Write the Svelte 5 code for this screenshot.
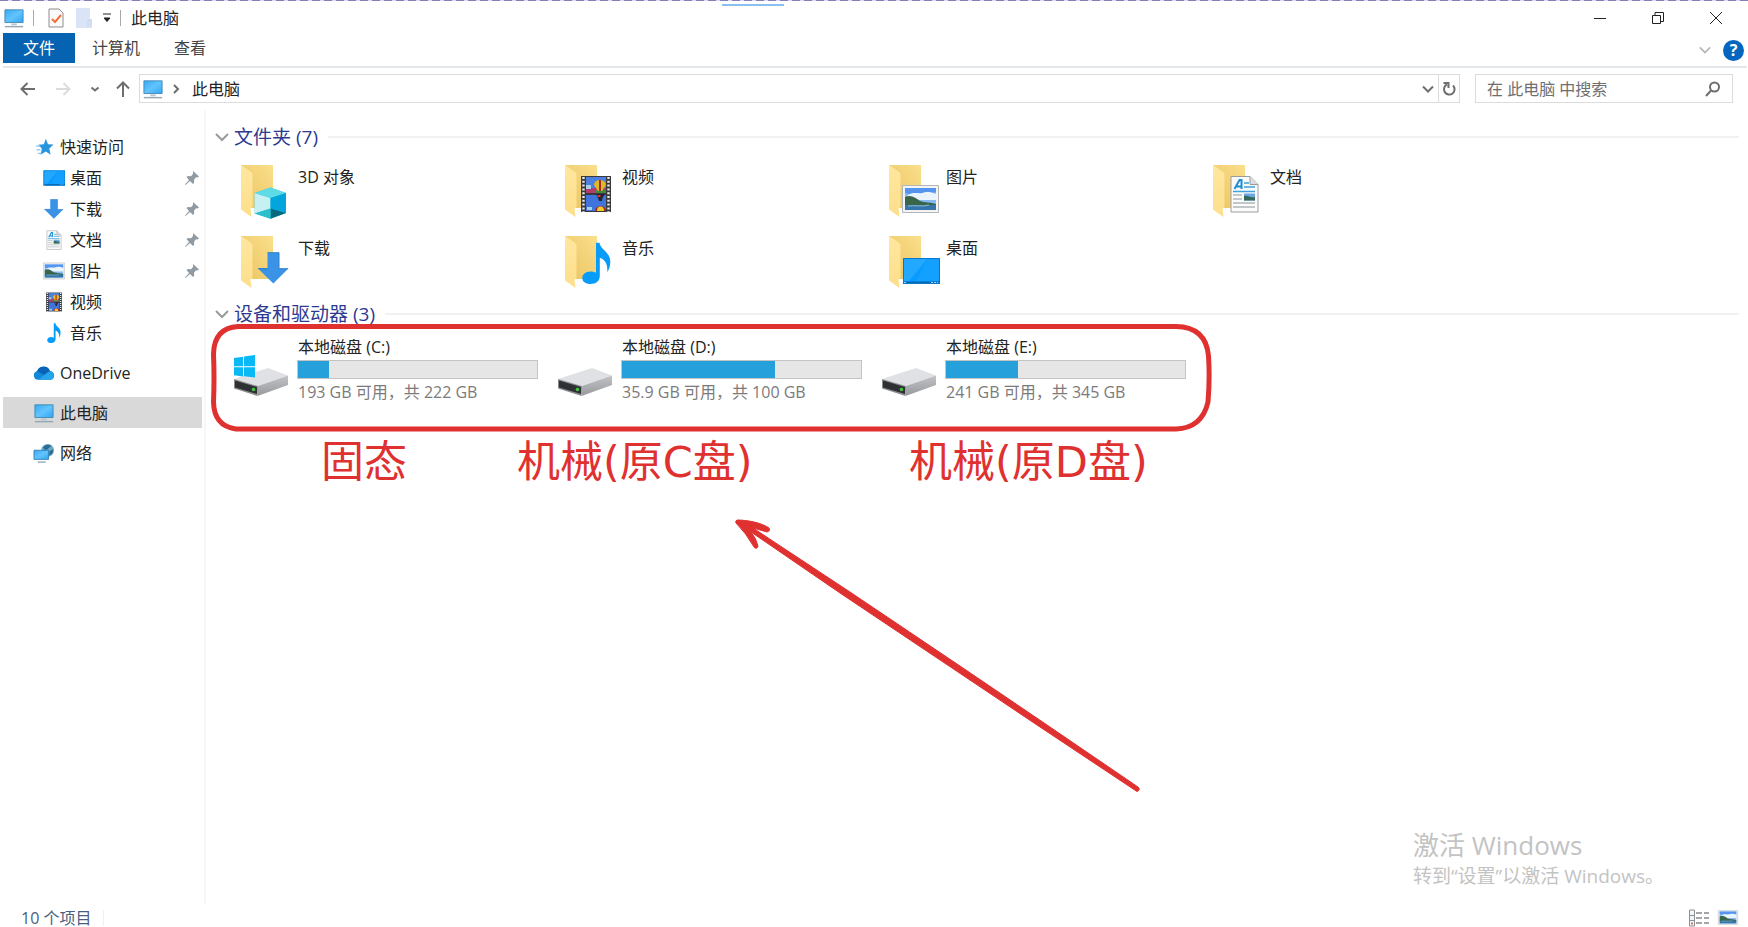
<script lang="ts">
  type Place = { id: string; name: string; icon: string; pinned?: boolean };
  type Drive = { name: string; used: number; info: string; system?: boolean };

  let query = $state("");
  let current = $state("pc");
  let showFolders = $state(true);
  let showDrives = $state(true);

  const quickAccess: Place[] = [
    { id: "desktop", name: "桌面", icon: "desktop", pinned: true },
    { id: "downloads", name: "下载", icon: "download", pinned: true },
    { id: "documents", name: "文档", icon: "document", pinned: true },
    { id: "pictures", name: "图片", icon: "picture", pinned: true },
    { id: "videos", name: "视频", icon: "video" },
    { id: "music", name: "音乐", icon: "music" },
  ];

  const roots: Place[] = [
    { id: "onedrive", name: "OneDrive", icon: "cloud" },
    { id: "pc", name: "此电脑", icon: "pc" },
    { id: "network", name: "网络", icon: "network" },
  ];

  const folders = [
    { name: "3D 对象", icon: "cube" },
    { name: "视频", icon: "video" },
    { name: "图片", icon: "picture" },
    { name: "文档", icon: "document" },
    { name: "下载", icon: "download" },
    { name: "音乐", icon: "music" },
    { name: "桌面", icon: "desktop" },
  ];

  const drives: Drive[] = [
    { name: "本地磁盘 (C:)", used: 13, info: "193 GB 可用，共 222 GB", system: true },
    { name: "本地磁盘 (D:)", used: 64, info: "35.9 GB 可用，共 100 GB" },
    { name: "本地磁盘 (E:)", used: 30, info: "241 GB 可用，共 345 GB" },
  ];

  // part of the 56x56 tile that each shape fills, used for the small icons
  const boxes: Record<string, string> = {
    video: "22 12 32 38",
    picture: "20 22 37 28",
    document: "24 12 29 38",
    download: "24 18 31 32",
    music: "24 8 29 42",
    desktop: "20 23 38 28",
    pc: "0 0 22 22",
    cloud: "0 0 22 22",
    network: "0 0 22 22",
    star: "0 0 22 22",
  };
</script>

{#snippet shape(name: string)}
  {#if name === "cube"}
    <path d="M36.500 24.500 52 30v20l-15.500 5.700L20.700 50.500V30z" fill="#35c3d6" />
    <path d="M20.700 30 36.500 35v10.500L20.700 50.500z" fill="#c6f0f2" />
    <path d="M36.500 24.500 52 30l-15.500 5-15.800-5z" fill="#5fdbe6" />
    <path d="M52 30 36.500 35v10.500L52 50z" fill="#03a6dc" />
    <path d="M36.500 45.500 52 50l-15.500 5.700z" fill="#04697f" />
    <path d="M36.500 45.500 20.700 50.500l15.800 5.200z" fill="#2cc0cd" />
  {:else if name === "video"}
    <path d="M23 13h30v36H23z" fill="#3a3a3c" />
    <path d="M28 14h20v16H28z" fill="#4c7fe0" />
    <path d="M28 32h20v16H28z" fill="#3f74dc" />
    <path d="M28 25h20v5H28z" fill="#b23d6d" />
    <path d="M37 27h11v3H37z" fill="#3e8b3c" />
    <path d="M28 22h5v4h-5zM29 44h5v3h-5z" fill="#a8d0e8" />
    <path d="M36 22a6 5 0 0 1 12 0l-4 6h-4z" fill="#e4b823" />
    <path d="M41 17h2v11h-2zM37 48a5.500 5 0 0 1 11 0z" fill="#a92c23" />
    <path d="M39 48a3.500 4.500 0 0 1 7 0z" fill="#f0cc2d" />
    <path d="M38 31h9l-2.500 4L44 38h-3l-1-3z" fill="#23242e" />
    <path d="M39.500 32h3v2h-3z" fill="#d33" />
    <path d="M25.500 14v35M50.500 14v35" stroke="#e8e8e8" stroke-width="2.400" stroke-dasharray="2 1.800" />
  {:else if name === "picture"}
    <path d="M20.500 22.500h36v27h-36z" fill="#f4f4f4" stroke="#b4b7ba" />
    <path d="M23 25h31v22H23z" fill="#86baf0" />
    <path d="M23 25h31v4c-10 3-22 4-31 1z" fill="#5496ef" />
    <path d="M25 33c5-5 12-2 15-3s8-2 14 1v6H25z" fill="#eaf4fc" />
    <path d="M23 34c6-3 11 1 15 4 5 2 11 1 16 3v2H23z" fill="#39664b" />
    <path d="M23 42h31v5H23z" fill="#3575a9" />
    <path d="M26 43c7-1 14 1 21-1" stroke="#8bbbd2" fill="none" />
  {:else if name === "document"}
    <path d="M25 13.500h19l8 8V49H25z" fill="#fbfbfb" stroke="#9a9da0" />
    <path d="M44 13.500v8h8" fill="#dcdcdc" stroke="#9a9da0" />
    <path d="m28.500 26 5-9h2v9M30 23.500h5" fill="none" stroke="#1c8fd4" stroke-width="2" />
    <path d="M38 20h5M38 24h11M27 28.500h22" stroke="#3da2dd" stroke-width="1.500" />
    <path d="M27 32h9M27 36h9M27 40h22M27 44h22" stroke="#b3b7ba" stroke-width="1.300" />
    <path d="M38 30.500h11v7H38z" fill="#6ba7e0" />
    <path d="M38 33c4-1 6 2 11 1v3.500H38z" fill="#36685c" />
  {:else if name === "download"}
    <path d="M33.500 18.700H45v16h9.200L39.300 49.600 24.300 34.700h9.200z" fill="#3a93e6" />
    <path d="M33.500 18.700H45v16h9.200M24.300 34.700h9.200z" fill="none" stroke="#2c80cf" />
  {:else if name === "music"}
    <path
      d="M38 8.700h3.500c.8 7 10.800 9 10.800 19 0 5-1.500 8-3 10.500.5-8-2-12.500-7.500-14.500V42c0 5-4 8-9 8-5.500 0-8.500-2.500-8.500-6s3-6.500 8-6.500c2 0 4 .4 5.700 1.300z"
      fill="#079bfa"
    />
  {:else if name === "desktop"}
    <path d="M21 24h37v26H21z" fill="#099bff" />
    <path d="M21 24h25L27 47h-6z" fill="#23a8ff" />
    <path d="M46 24h12v23H34z" fill="#1aa4ff" opacity=".6" />
    <path d="M21 47.500h37V50H21z" fill="#0768b4" />
    <path d="M22 48.500h2M49 48.500h7" stroke="#9cd3fa" stroke-dasharray="2 1" />
    <path d="M21.500 24.500h36v25h-36z" fill="none" stroke="#0877c8" />
  {:else if name === "pc"}
    <path d="M1 2h20v14H1z" fill="url(#screen)" stroke="#3f88b5" />
    <path d="M8 17h6v2H8z" fill="#b9c5cd" />
    <path d="M1 20.500h20" stroke="#94a8b8" stroke-width="1.600" />
  {:else if name === "cloud"}
    <path d="M4.500 18.500a5 5 0 0 1-1-9.800 7.500 7 0 0 1 14 0 5 5 0 0 1 1 9.800z" fill="#1087d8" />
    <path d="M3.500 9A7.500 7 0 0 1 16.500 6.500l1 2.500-6.500 4z" fill="#0a63b8" />
    <path d="M4.500 18.500 16 9.500a4.500 4.500 0 0 1 2.500 9z" fill="#27a5ea" />
  {:else if name === "network"}
    <circle cx="15" cy="8" r="7" fill="#6ba9c6" />
    <path d="M10 5c2-3 6-4 9-2-1 2-3 2-4 4l-3 1zM17 9l4-2c0 4-1 6-4 7z" fill="#2b6c95" />
    <path d="M0 8h16v10H0z" fill="url(#screen)" stroke="#3282b2" />
    <path d="M4 21h9" stroke="#94a8b8" stroke-width="1.500" />
  {:else if name === "star"}
    <path d="m13 2 2.400 6 6.100.3-4.700 4.400 1.500 6.800-5.300-3.500-5.800 3.500 1.500-6.500L4.500 8.600l6.400-.6z" fill="#2796df" />
    <path d="M2 10h5M3 14h4M4 18h4" stroke="#8fcdf4" stroke-width="1.500" />
  {/if}
{/snippet}

{#snippet small(name: string)}
  <svg class="small" viewBox={boxes[name]} aria-hidden="true">{@render shape(name)}</svg>
{/snippet}

{#snippet chevron()}
  <svg class="chevron" viewBox="0 0 14 14" aria-hidden="true"><path d="m1 4 6 6 6-6" /></svg>
{/snippet}

<svg class="defs" aria-hidden="true">
  <defs>
    <linearGradient id="screen" x1="0" y1="0" x2="1" y2="1">
      <stop offset="0" stop-color="#36a9f3" />
      <stop offset=".5" stop-color="#62c4ff" />
      <stop offset="1" stop-color="#30a5f2" />
    </linearGradient>
    <linearGradient id="folder-back" x1="0" y1="1" x2="1" y2="0">
      <stop offset="0" stop-color="#e9c362" />
      <stop offset="1" stop-color="#fbdf8b" />
    </linearGradient>
    <linearGradient id="folder-flap" x1="0" y1="0" x2="0" y2="1">
      <stop offset="0" stop-color="#ffe79f" />
      <stop offset="1" stop-color="#fddf8b" />
    </linearGradient>
    <linearGradient id="drive-side" x1="0" y1="0" x2="0" y2="1">
      <stop offset="0" stop-color="#c2c3c6" />
      <stop offset="1" stop-color="#98999c" />
    </linearGradient>
  </defs>
</svg>

<div class="window" lang="zh-CN">
  <header class="titlebar">
    {@render small("pc")}
    <span class="bar"></span>
    <button class="quick" aria-label="属性">
      <svg width="18" height="20" viewBox="0 0 18 20">
        <path d="M2 1h10l4 4v14H2z" fill="#fafafa" stroke="#8d8d8d" />
        <path d="m5 11 3 3 6-7" fill="none" stroke="#f0703a" stroke-width="2" />
      </svg>
    </button>
    <button class="quick" aria-label="新建文件夹">
      <svg width="18" height="20" viewBox="0 0 18 20">
        <path d="M1 0h14v11h2v9H1z" fill="#dae4f6" />
        <path d="M13 19v-7h3v7" fill="none" stroke="#c6d4ec" />
      </svg>
    </button>
    <button class="more" aria-label="自定义快速访问工具栏">
      <svg width="10" height="10" viewBox="0 0 10 10"><path d="M1 1h8M2 5h6L5 8.500z" fill="#222" stroke="#222" /></svg>
    </button>
    <span class="bar"></span>
    <h1>此电脑</h1>
    <div class="controls">
      <button aria-label="最小化"><svg width="14" height="14" viewBox="0 0 14 14"><path d="M1 7.500h12" /></svg></button>
      <button aria-label="还原">
        <svg width="14" height="14" viewBox="0 0 14 14"><path d="M1.500 4.500h8v8h-8zM4 4.500v-3h8.500v9H10" /></svg>
      </button>
      <button aria-label="关闭"><svg width="14" height="14" viewBox="0 0 14 14"><path d="m1 1 12 12M13 1 1 13" /></svg></button>
    </div>
  </header>

  <nav class="ribbon" aria-label="功能区">
    <button class="file">文件</button>
    <button>计算机</button>
    <button>查看</button>
    <div class="ribbon-end">
      <button class="collapse" aria-label="展开功能区">{@render chevron()}</button>
      <button class="help" aria-label="帮助">?</button>
    </div>
  </nav>

  <div class="navbar">
    <div class="history">
      <button aria-label="后退"><svg width="16" height="14" viewBox="0 0 16 14"><path d="M15 7H1.500M7.500 1l-6 6 6 6" /></svg></button>
      <button aria-label="前进" disabled>
        <svg width="16" height="14" viewBox="0 0 16 14"><path d="M1 7h13.500M8.500 1l6 6-6 6" /></svg>
      </button>
      <button class="recent" aria-label="最近的位置">
        <svg width="10" height="14" viewBox="0 0 10 14"><path d="m1.500 5.500 3.500 3 3.500-3" /></svg>
      </button>
      <button aria-label="上移"><svg width="14" height="16" viewBox="0 0 14 16"><path d="M7 16V1.500M1 7.500l6-6 6 6" /></svg></button>
    </div>
    <div class="address">
      {@render small("pc")}
      <svg class="crumb-arrow" width="8" height="10" viewBox="0 0 8 10" aria-hidden="true"><path d="m2 1 4 4-4 4" /></svg>
      <button class="crumb">此电脑</button>
      <button class="drop" aria-label="以前的位置">
        <svg width="12" height="12" viewBox="0 0 12 12"><path d="m1 3.500 5 5 5-5" /></svg>
      </button>
      <button class="refresh" aria-label="刷新">
        <svg width="14" height="16" viewBox="0 0 14 16"><path d="M11 4.500a5.300 5.300 0 1 1-6-1M1.500 2h5v5" /></svg>
      </button>
    </div>
    <form class="search" role="search">
      <input type="text" aria-label="搜索" placeholder="在 此电脑 中搜索" bind:value={query} />
      <svg width="16" height="16" viewBox="0 0 16 16" aria-hidden="true"><circle cx="9.500" cy="6" r="4.500" /><path d="M6 9.500 1 15" /></svg>
    </form>
  </div>

  <div class="body">
    <nav class="sidebar" aria-label="导航窗格">
      <button class="row">{@render small("star")}快速访问</button>
      {#each quickAccess as place (place.id)}
        <button class="row child" class:selected={current === place.id} onclick={() => (current = place.id)}>
          {@render small(place.icon)}{place.name}
          {#if place.pinned}
            <svg class="pin" width="14" height="14" viewBox="0 0 14 14" aria-hidden="true">
              <path d="m8 0 6 5.500-1.500 1-1.500-.2-2 2.400.2 3L8 13 5 10l-4.500 4L0 13.500 4 9 1.500 6 3 5l3 .2L8 3z" />
            </svg>
          {/if}
        </button>
      {/each}
      {#each roots as place (place.id)}
        <button class="row root" class:selected={current === place.id} onclick={() => (current = place.id)}>
          {@render small(place.icon)}{place.name}
        </button>
      {/each}
    </nav>

    <main>
      <section>
        <h2>
          <button aria-expanded={showFolders} onclick={() => (showFolders = !showFolders)}>{@render chevron()}文件夹 (7)</button>
        </h2>
        {#if showFolders}
          <div class="grid">
            {#each folders as folder}
              <a class="folder" href="#{folder.icon}">
                <svg class="tile-icon" viewBox="0 0 56 56" aria-hidden="true">
                  <path d="M7 2h32v43H7z" fill="url(#folder-back)" />
                  <path d="m7 2 9.500 6.500c1.500 1 2 2 2 3.500v32l-2 1.500 1 8.500L7 46.500z" fill="url(#folder-flap)" />
                  {@render shape(folder.icon)}
                </svg>
                <span>{folder.name}</span>
              </a>
            {/each}
          </div>
        {/if}
      </section>

      <section>
        <h2>
          <button aria-expanded={showDrives} onclick={() => (showDrives = !showDrives)}>{@render chevron()}设备和驱动器 (3)</button>
        </h2>
        {#if showDrives}
          <div class="grid drives">
            {#each drives as drive}
              <div class="drive">
                <svg class="tile-icon" viewBox="0 0 56 56" aria-hidden="true">
                  <path d="M0 37 34 26l20 7.500L24 44z" fill="#e0e1e5" />
                  <path d="M24 44 54 33.500V43L23.500 54z" fill="url(#drive-side)" />
                  <path d="m0 37 24 7-.5 10L0 46.500z" fill="#8b8c8e" />
                  <path d="m1 38.500 22 6.500v7L1 45.500z" fill="#2f3033" />
                  <circle cx="19.500" cy="47.500" r="1.800" fill="#3fc63a" />
                  {#if drive.system}
                    <path d="m0 16 9-1.200v9.400H0zM10 14.600 21 13v11.200H10zM0 25.200h9v9.200l-9-1.200zM10 25.200h11v10.300l-11-1.200z" fill="#09b9f6" />
                  {/if}
                </svg>
                <div class="drive-text">
                  <span class="drive-name">{drive.name}</span>
                  <div class="meter"><div class="used" style="width: {drive.used}%"></div></div>
                  <span class="info">{drive.info}</span>
                </div>
              </div>
            {/each}
          </div>
        {/if}
      </section>
    </main>
  </div>

  <footer>
    <span>10 个项目</span>
    <span class="bar"></span>
    <div class="views">
      <button aria-label="详细信息">
        <svg width="22" height="18" viewBox="0 0 22 18">
          <path d="M1.500 1h5v16h-5z" fill="#f2f4f8" stroke="#8d9096" />
          <path d="M2 6.500h4M2 11.500h4" stroke="#8d9096" />
          <path d="M3 14.500h2" stroke="#e0745f" stroke-width="2" />
          <path d="M8 4h6M16 4h5M8 9h6M16 9h5M8 14h6M16 14h5" stroke="#86888c" stroke-width="1.500" />
        </svg>
      </button>
      <button class="large" aria-label="大图标">{@render small("picture")}</button>
    </div>
  </footer>

  <aside class="watermark">
    <strong>激活 Windows</strong>
    <span>转到“设置”以激活 Windows。</span>
  </aside>

  <!-- hand-drawn notes laid over the window -->
  <div class="notes">
    <svg aria-hidden="true">
      <path
        class="frame"
        d="M238 326.500H1176Q1206 327 1208.500 356Q1210 378 1208 402Q1202 428 1176 429H236Q214 426 213.500 402Q214.500 378 213.500 354Q214 328 238 326.500z"
      />
      <path
        class="arrow"
        d="M737 520C748 520 762 523 769 528Q771 531 767 532Q760 530 753 528L850 592L960 666L1050 727L1138 787Q1141 790 1137 791.500L1040 727L955 670L840 593L751 532Q756 538 758 546Q757 550 754 547Q746 533 736 523Q735 521 737 520z"
      />
    </svg>
    <span class="note ssd">固态</span>
    <span class="note hdd-c">机械(原C盘)</span>
    <span class="note hdd-d">机械(原D盘)</span>
  </div>
</div>

<style>
  :global(body) {
    margin: 0;
    background: #fff;
  }

  .window {
    position: relative;
    box-sizing: border-box;
    min-height: 100vh;
    padding: 3px 1px 0 3px;
    display: flex;
    flex-direction: column;
    background: #fff;
    color: #222;
    font-family: "Open Sans", "Noto Sans CJK SC", sans-serif;
    font-size: 16px;
    line-height: 22px;
  }
  .window::before {
    content: "";
    position: absolute;
    top: 0;
    left: 0;
    right: 0;
    height: 1px;
    background: repeating-linear-gradient(90deg, #8580b5 0 8px, #dcd8f8 8px 12px);
  }
  .window::after {
    content: "";
    position: absolute;
    top: 4px;
    left: 722px;
    width: 62px;
    height: 2px;
    background: #86bff0;
  }

  .defs {
    position: absolute;
    width: 0;
    height: 0;
  }

  button {
    display: flex;
    align-items: center;
    padding: 0;
    border: 0;
    background: none;
    color: inherit;
    font: inherit;
  }
  svg {
    display: block;
    flex: none;
  }
  .small {
    width: 22px;
    height: 20px;
  }
  .chevron {
    width: 14px;
    height: 14px;
    fill: none;
    stroke: #9a9a9a;
    stroke-width: 2;
  }
  .bar {
    width: 1px;
    height: 16px;
    background: #aaa;
  }

  .titlebar {
    display: flex;
    align-items: center;
    height: 30px;
  }
  .titlebar .bar {
    margin: 0 8px;
  }
  .quick {
    margin-left: 5px;
    margin-right: 5px;
  }
  .more {
    margin-left: 4px;
  }
  h1 {
    margin: 0 0 0 2px;
    font-size: 16px;
    font-weight: 400;
  }
  .controls {
    display: flex;
    margin-left: auto;
    padding-right: 2px;
  }
  .controls button {
    justify-content: center;
    width: 58px;
    height: 26px;
  }
  .controls svg {
    fill: none;
    stroke: #222;
    stroke-width: 1;
  }

  .ribbon {
    display: flex;
    align-items: flex-start;
    border-bottom: 2px solid #e4e8ea;
    padding-bottom: 3px;
  }
  .ribbon button {
    height: 30px;
    padding: 0 17px;
    color: #444;
  }
  .ribbon .file {
    padding: 0 20px;
    background: #0563b1;
    color: #fff;
  }
  .ribbon-end {
    display: flex;
    align-items: center;
    gap: 12px;
    height: 34px;
    margin: 0 3px -4px auto;
  }
  .ribbon .collapse {
    padding: 0;
  }
  .collapse .chevron {
    width: 12px;
    stroke: #b5b5b5;
  }
  .ribbon .help {
    justify-content: center;
    width: 21px;
    height: 21px;
    padding: 0;
    border-radius: 50%;
    background: #0566c0;
    color: #fff;
    font-weight: 700;
  }

  .navbar {
    display: flex;
    align-items: center;
    padding: 6px 14px 7px 17px;
  }
  .history {
    display: flex;
    align-items: center;
    gap: 19px;
    margin-right: 9px;
  }
  .history .recent {
    margin-right: -3px;
  }
  .navbar svg:not(.small) {
    fill: none;
    stroke: #6e6e6e;
    stroke-width: 2;
  }
  .history button:disabled svg {
    stroke: #dcdcdc;
  }
  .address,
  .search {
    box-sizing: border-box;
    display: flex;
    align-items: center;
    height: 29px;
    border: 1px solid #dcdcdc;
  }
  .address {
    flex: 1;
    padding-left: 2px;
  }
  .crumb-arrow {
    margin: 0 12px 0 8px;
  }
  .crumb {
    flex: 1;
  }
  .drop {
    margin-right: 4px;
  }
  .refresh {
    justify-content: center;
    width: 21px;
    height: 27px;
    border-left: 1px solid #dcdcdc;
  }
  .search {
    width: 258px;
    margin-left: 15px;
    padding: 0 11px;
  }
  .search input {
    flex: 1;
    min-width: 0;
    padding: 0;
    border: 0;
    outline: 0;
    background: none;
    color: #333;
    font: inherit;
  }
  .search input::placeholder {
    color: #6f6f6f;
  }

  .body {
    flex: 1;
    display: flex;
  }
  .sidebar {
    box-sizing: border-box;
    width: 203px;
    padding: 21px 2px 0 0;
    border-right: 2px solid #f7f7f7;
  }
  .row {
    gap: 5px;
    width: 100%;
    height: 31px;
    padding-left: 30px;
  }
  .child {
    padding-left: 40px;
  }
  .root {
    margin-top: 9px;
  }
  .row.selected {
    background: #d9d9d9;
  }
  .pin {
    margin: 0 3px 0 auto;
    fill: #8f9aa3;
  }

  main {
    flex: 1;
    padding: 14px 8px 0 9px;
  }
  h2 {
    display: flex;
    align-items: center;
    gap: 10px;
    margin: 0 0 5px;
    color: #2c3a92;
    font-size: 19px;
    font-weight: 400;
    line-height: 26px;
  }
  h2::after {
    content: "";
    flex: 1;
    height: 2px;
    background: #f1f1f1;
  }
  h2 button {
    gap: 5px;
  }
  section + section {
    margin-top: 4px;
  }
  .grid {
    display: grid;
    grid-template-columns: repeat(auto-fill, 324px);
    padding-left: 19px;
  }
  .tile-icon {
    width: 56px;
    height: 56px;
    overflow: visible;
  }
  .folder {
    display: flex;
    gap: 8px;
    height: 63px;
    padding-top: 8px;
    color: inherit;
    text-decoration: none;
  }
  .folder span {
    padding-top: 3px;
  }
  .drives {
    padding-top: 4px;
  }
  .drive {
    display: flex;
    align-items: center;
    gap: 7px;
  }
  .drive-text {
    display: flex;
    flex-direction: column;
    gap: 2px;
    width: 241px;
  }
  .drive-name,
  .info {
    padding-left: 1px;
  }
  .info {
    color: #7b7b7b;
  }
  .meter {
    box-sizing: border-box;
    height: 19px;
    border: 1px solid #c4c4c4;
    background: #e6e6e6;
  }
  .used {
    height: 100%;
    background: #26a0da;
  }

  footer {
    display: flex;
    align-items: center;
    height: 19px;
    padding: 4px 8px 0 18px;
    color: #4a5f80;
  }
  footer .bar {
    margin-left: 12px;
    background: #f0f0f0;
  }
  .views {
    display: flex;
    gap: 7px;
    margin-left: auto;
  }
  .large .small {
    height: 15px;
  }

  .watermark {
    position: absolute;
    right: 84px;
    bottom: 37px;
    display: flex;
    flex-direction: column;
    color: #c3c3c3;
    font-size: 19px;
    line-height: 28px;
  }
  .watermark strong {
    font-size: 26px;
    font-weight: 400;
    line-height: 34px;
  }

  .notes {
    position: absolute;
    inset: 0;
    overflow: hidden;
    color: #e03131;
    pointer-events: none;
  }
  .notes svg {
    width: 100%;
    height: 100%;
  }
  .frame {
    fill: none;
    stroke: #e03131;
    stroke-width: 5;
  }
  .arrow {
    fill: #e03131;
    stroke: #e03131;
    stroke-width: 1;
  }
  .note {
    position: absolute;
    top: 434px;
    font-family: "DejaVu Sans", "Noto Sans CJK SC", sans-serif;
    font-size: 43px;
    line-height: 56px;
    white-space: nowrap;
  }
  .ssd {
    left: 321px;
  }
  .hdd-c {
    left: 517px;
  }
  .hdd-d {
    left: 909px;
  }
</style>
